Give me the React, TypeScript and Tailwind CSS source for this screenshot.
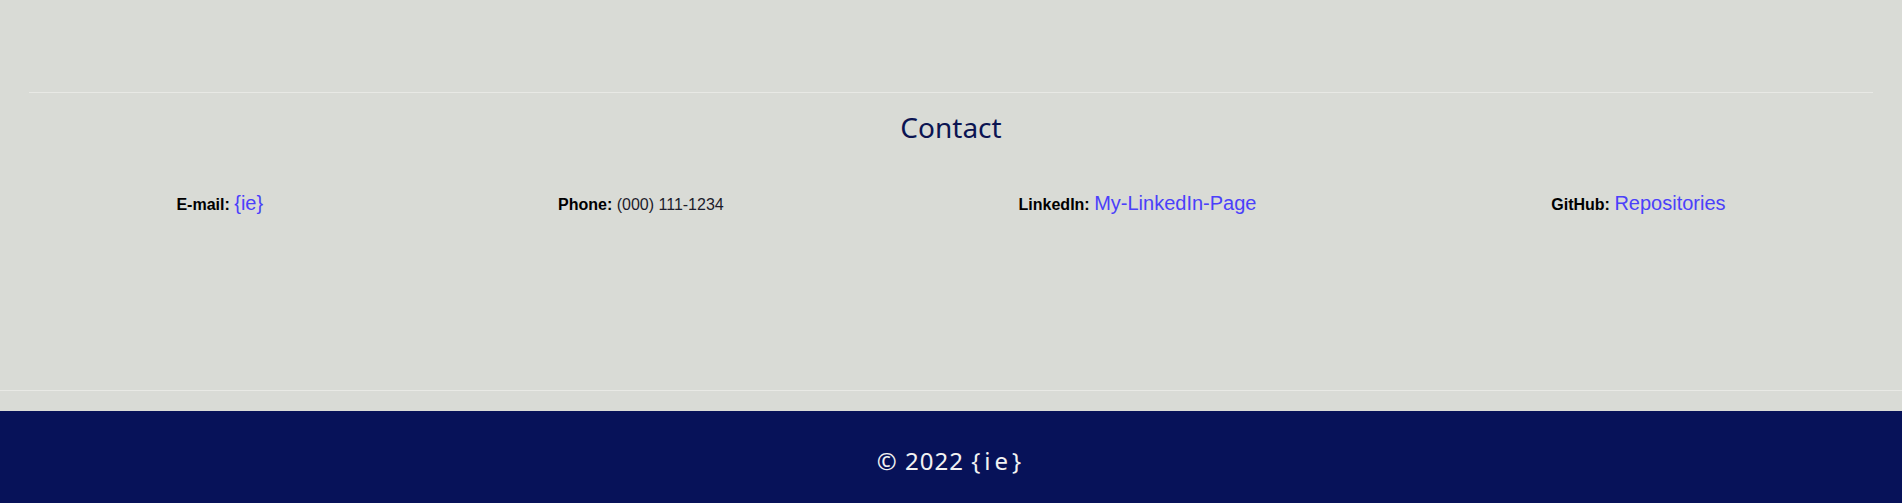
const contacts = [
  { label: 'E-mail:', value: '{ie}', link: true },
  { label: 'Phone:', value: '(000) 111-1234', link: false },
  { label: 'LinkedIn:', value: 'My-LinkedIn-Page', link: true },
  { label: 'GitHub:', value: 'Repositories', link: true },
];

const ContactItem = ({ label, value, link }: { label: string; value: string; link: boolean }) => {
  return (
    <div className="leading-[23px] whitespace-nowrap">
      <span className="font-bold text-[16px] text-black">{label}</span>{' '}
      {link ? (
        <a href="#" className="text-[20px] text-[#4b40fa]">{value}</a>
      ) : (
        <span className="text-[16px] text-[#1c1c2c]">{value}</span>
      )}
    </div>
  );
};

export default function App() {
  return (
    <div className="min-h-[503px] bg-[#d9dbd6] font-['Liberation_Sans',Arial,sans-serif]">
      <section className="pt-[92px] border-b border-[#e8e9e5]">
        <div className="mx-[29px] border-t border-[#e8e9e5] pb-[174px]">
          <h2 className="mt-[15px] text-center text-[28px] leading-[38px] text-[#0b1452] font-['Noto_Sans',sans-serif]">
            Contact
          </h2>
          <div className="mt-[46px] flex justify-around items-baseline">
            {contacts.map((c) => (
              <ContactItem key={c.label} {...c} />
            ))}
          </div>
        </div>
      </section>
      <div className="h-[20px]" />
      <footer className="h-[92px] bg-[#071259] flex items-center justify-center">
        <p className="text-[24px] tracking-[1px] text-[#f2f2f2] font-['Noto_Sans',sans-serif] pt-[8px]">
          © 2022 <span className="tracking-[4px]">{'{ie}'}</span>
        </p>
      </footer>
    </div>
  );
}
